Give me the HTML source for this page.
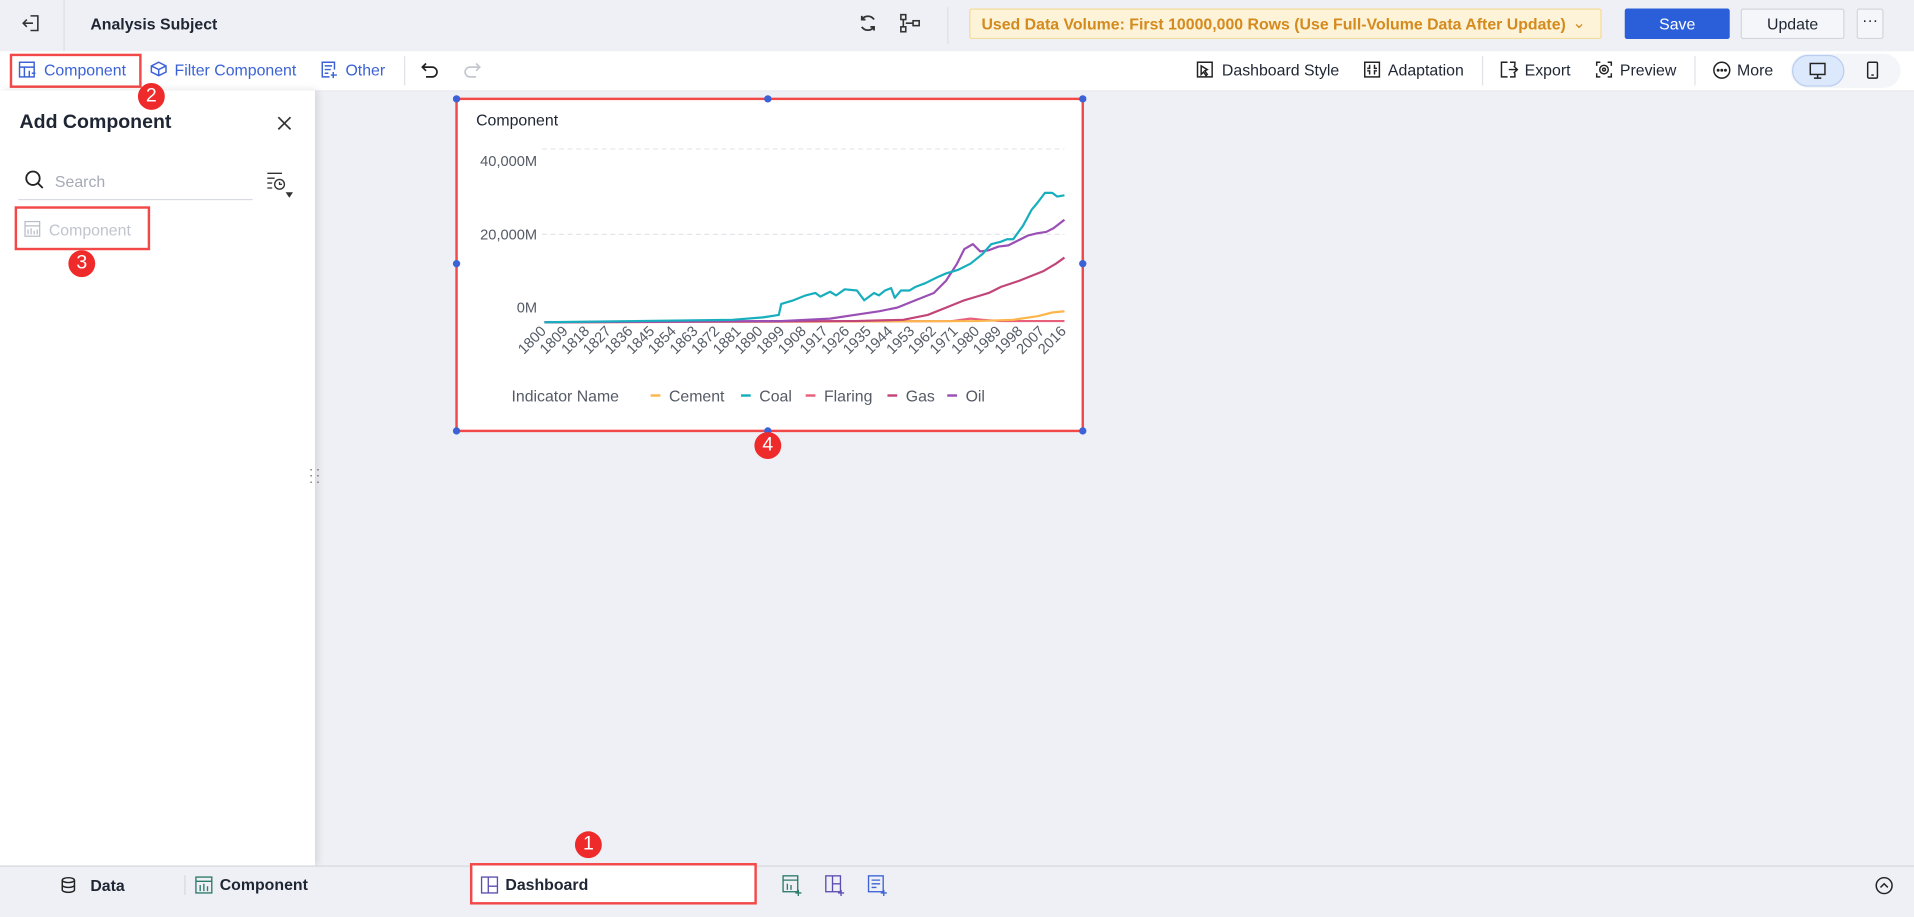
<!DOCTYPE html>
<html><head><meta charset="utf-8"><style>
html,body{margin:0;padding:0;width:1914px;height:915px;overflow:hidden;background:#eef0f5;}
#w{position:absolute;left:0;top:0;width:1568px;height:750px;transform:scale(1.2207);transform-origin:0 0;font-family:"Liberation Sans",sans-serif;color:#1f2633;font-size:13px;}
.a{position:absolute;white-space:nowrap;}
.top{left:0;top:0;width:1568px;height:42px;background:#eef0f5;}
.tb{left:0;top:42px;width:1568px;height:32px;background:#fff;border-bottom:1px solid #e6e8ee;}
.blue{color:#3b62d6;}
.badge{position:absolute;width:22px;height:22px;border-radius:50%;background:#ee2a2a;color:#fff;font-size:16px;text-align:center;line-height:22px;}
.rb{position:absolute;border:2px solid #f24848;box-sizing:border-box;}
svg{position:absolute;overflow:visible}
.ax{font-size:12px;fill:#555b66;}
.t{top:50px}
</style></head><body><div id="w">
<div class="a top"></div>
<svg style="left:18px;top:11px" width="16" height="16" viewBox="0 0 16 16" fill="none" stroke="#333" stroke-width="1.3"><path d="M7 2h6v12H7M1 8h8M4 5L1 8l3 3"/></svg>
<div class="a" style="left:52px;top:0;width:1px;height:42px;background:#dcdfe6"></div>
<div class="a" style="left:74px;top:12px;font-weight:bold;font-size:13px">Analysis Subject</div>
<svg style="left:703px;top:11px" width="16" height="16" viewBox="0 0 16 16" fill="none" stroke="#333" stroke-width="1.5"><path d="M13 5A6 6 0 0 0 3 5M3 11a6 6 0 0 0 10 0M3 2v3h3M13 14v-3h-3"/></svg>
<svg style="left:737px;top:11px" width="18" height="16" viewBox="0 0 18 16" fill="none" stroke="#333" stroke-width="1.3"><rect x="1" y="1" width="4" height="4"/><rect x="1" y="11" width="4" height="4"/><rect x="11" y="6" width="5" height="4"/><path d="M3 5v6M5 8h6"/></svg>
<div class="a" style="left:776px;top:6px;width:1px;height:30px;background:#dcdfe6"></div>
<div class="a" style="left:794px;top:7px;width:518px;height:25px;background:#fdf3d9;border:1px solid #f4dc9a;box-sizing:border-box;border-radius:2px;color:#d48a1c;font-weight:bold;font-size:13px;line-height:23px;padding-left:9px">Used Data Volume: First 10000,000 Rows (Use Full-Volume Data After Update)<span style="position:absolute;right:12px;top:-1px;font-weight:normal">&#8964;</span></div>
<div class="a" style="left:1331px;top:7px;width:86px;height:25px;background:#2b5fd9;border-radius:2px;color:#fff;text-align:center;line-height:25px;font-size:13px">Save</div>
<div class="a" style="left:1426px;top:7px;width:85px;height:25px;background:#f5f6f9;border:1px solid #d3d6de;box-sizing:border-box;border-radius:2px;text-align:center;line-height:23px;font-size:13px">Update</div>
<div class="a" style="left:1521px;top:7px;width:22px;height:25px;background:#f5f6f9;border:1px solid #d3d6de;box-sizing:border-box;border-radius:2px;text-align:center;line-height:18px;font-size:13px">···</div>

<div class="a tb"></div>
<svg style="left:15px;top:50px" width="14" height="14" viewBox="0 0 14 14" fill="none" stroke="#3b62d6" stroke-width="1.2"><rect x="1" y="1" width="12" height="12"/><path d="M1 5h12M5 5v8M9 8v5M11 10h3"/></svg>
<div class="a blue t" style="left:36px">Component</div>
<div class="rb" style="left:8px;top:44px;width:108px;height:28px"></div>
<svg style="left:123px;top:50px" width="14" height="14" viewBox="0 0 14 14" fill="none" stroke="#3b62d6" stroke-width="1.2"><path d="M7 1l6 3v5l-6 3-6-3V4zM1 4l6 3 6-3M7 7v5"/></svg>
<div class="a blue t" style="left:143px">Filter Component</div>
<svg style="left:263px;top:50px" width="14" height="14" viewBox="0 0 14 14" fill="none" stroke="#3b62d6" stroke-width="1.2"><path d="M11 7V1H1v12h6M3 4h6M3 7h5M3 10h3M10 9v5M8 11.5h5"/></svg>
<div class="a blue t" style="left:283px">Other</div>
<div class="a" style="left:331px;top:46px;width:1px;height:24px;background:#e0e2e8"></div>
<svg style="left:345px;top:51px" width="14" height="12" viewBox="0 0 14 12" fill="none" stroke="#222" stroke-width="1.4"><path d="M4 1L1 4l3 3M1 4h8a4 4 0 0 1 0 8H4"/></svg>
<svg style="left:380px;top:51px" width="14" height="12" viewBox="0 0 14 12" fill="none" stroke="#c4c7cf" stroke-width="1.4"><path d="M10 1l3 3-3 3M13 4H5a4 4 0 0 0 0 8h5"/></svg>
<svg style="left:980px;top:50px" width="14" height="14" viewBox="0 0 14 14" fill="none" stroke="#222" stroke-width="1.2"><path d="M1 1h12v12H1zM4 4l5 3-2 1 2 3-1 1-2-3-2 2z"/></svg>
<div class="a t" style="left:1001px">Dashboard Style</div>
<svg style="left:1117px;top:50px" width="14" height="14" viewBox="0 0 14 14" fill="none" stroke="#222" stroke-width="1.2"><rect x="1" y="1" width="12" height="12"/><path d="M5 3v3H3M9 3v3h2M5 11V8H3M9 11V8h2"/></svg>
<div class="a t" style="left:1137px">Adaptation</div>
<div class="a" style="left:1214px;top:46px;width:1px;height:24px;background:#e0e2e8"></div>
<svg style="left:1229px;top:50px" width="14" height="14" viewBox="0 0 14 14" fill="none" stroke="#222" stroke-width="1.2"><path d="M6 1H1v12h5M8 1h4v3M8 13h4v-3M7 7h7M11 4l3 3-3 3"/></svg>
<div class="a t" style="left:1249px">Export</div>
<svg style="left:1307px;top:50px" width="14" height="14" viewBox="0 0 14 14" fill="none" stroke="#222" stroke-width="1.2"><path d="M1 4V1h3M10 1h3v3M13 10v3h-3M4 13H1v-3"/><circle cx="7" cy="7" r="3.5"/><circle cx="7" cy="7" r="1.2"/></svg>
<div class="a t" style="left:1327px">Preview</div>
<div class="a" style="left:1388px;top:46px;width:1px;height:24px;background:#e0e2e8"></div>
<svg style="left:1403px;top:50px" width="15" height="15" viewBox="0 0 15 15" fill="none" stroke="#222" stroke-width="1.2"><circle cx="7.5" cy="7.5" r="6.5"/><circle cx="4.5" cy="7.5" r=".6" fill="#222"/><circle cx="7.5" cy="7.5" r=".6" fill="#222"/><circle cx="10.5" cy="7.5" r=".6" fill="#222"/></svg>
<div class="a t" style="left:1423px">More</div>
<div class="a" style="left:1467px;top:44px;width:90px;height:28px;background:#f3f5f8;border-radius:14px"></div>
<div class="a" style="left:1468px;top:45px;width:43px;height:26px;background:#dce8fb;border:1px solid #b9cdf2;box-sizing:border-box;border-radius:13px"></div>
<svg style="left:1482px;top:51px" width="14" height="14" viewBox="0 0 14 14" fill="none" stroke="#222" stroke-width="1.2"><rect x="1" y="1" width="12" height="9"/><path d="M7 10v3M4 13h6"/></svg>
<svg style="left:1529px;top:50px" width="10" height="15" viewBox="0 0 10 15" fill="none" stroke="#222" stroke-width="1.2"><rect x="1" y="1" width="8" height="13" rx="1"/><path d="M4 11.5h2"/></svg>

<div class="a" style="left:0;top:74px;width:258px;height:635px;background:#fff;box-shadow:2px 0 6px rgba(0,0,0,.12)"></div>
<div class="a" style="left:16px;top:92px;font-weight:bold;font-size:16px">Add Component</div>
<svg style="left:227px;top:95px" width="12" height="12" viewBox="0 0 12 12" stroke="#333" stroke-width="1.4"><path d="M1 1l10 10M11 1L1 11"/></svg>
<svg style="left:20px;top:139px" width="16" height="16" viewBox="0 0 16 16" fill="none" stroke="#222" stroke-width="1.5"><circle cx="7" cy="7" r="5.5"/><path d="M11 11l4 4"/></svg>
<div class="a" style="left:45px;top:141px;color:#a5aab5">Search</div>
<div class="a" style="left:15px;top:163px;width:192px;height:1px;background:#d8dbe1"></div>
<svg style="left:218px;top:140px" width="25" height="22" viewBox="0 0 25 22" fill="none" stroke="#333" stroke-width="1.1"><path d="M1 2h12M1 6h6M1 10h4M1 14h4"/><circle cx="11" cy="11" r="4"/><path d="M11 9v2h2"/><path d="M17 18l2 3 2-3z" fill="#333"/></svg>
<svg style="left:20px;top:181px" width="13" height="13" viewBox="0 0 13 13" fill="none" stroke="#b7bcc6" stroke-width="1"><rect x=".5" y=".5" width="12" height="12"/><path d="M.5 4h12M3 11V7M5.5 11V6M8 11V8M10.5 11V7"/></svg>
<div class="a" style="left:40px;top:181px;color:#c0c4cc">Component</div>
<div class="rb" style="left:12px;top:169px;width:111px;height:36px"></div>
<div class="badge" style="left:113px;top:68px">2</div>
<div class="badge" style="left:56px;top:205px">3</div>
<div class="a" style="left:253px;top:383px;color:#666;font-size:11px;line-height:5px;letter-spacing:2px">··<br>··<br>··</div>

<div class="a" style="left:374px;top:81px;width:513px;height:272px;background:#fff"></div>
<div class="rb" style="left:373px;top:80px;width:515px;height:274px"></div>
<div class="a" style="left:390px;top:91px;font-size:13px">Component</div>
<svg style="left:0;top:0" width="1568" height="750">
<g fill="#3b62d6"><circle cx="374" cy="81" r="3"/><circle cx="629" cy="81" r="3"/><circle cx="887" cy="81" r="3"/><circle cx="374" cy="216" r="3"/><circle cx="887" cy="216" r="3"/><circle cx="374" cy="353" r="3"/><circle cx="629" cy="353" r="3"/><circle cx="887" cy="353" r="3"/></g>
<path d="M444 122H872M444 192H872" stroke="#e3e5ea" stroke-dasharray="4 3"/>
<text class="ax" x="440" y="136" text-anchor="end">40,000M</text>
<text class="ax" x="440" y="196" text-anchor="end">20,000M</text>
<text class="ax" x="440" y="256" text-anchor="end">0M</text>
<g class="ax" text-anchor="end">
<text transform="translate(448,272) rotate(-45)">1800</text><text transform="translate(465.8,272) rotate(-45)">1809</text><text transform="translate(483.5,272) rotate(-45)">1818</text><text transform="translate(501.3,272) rotate(-45)">1827</text><text transform="translate(519,272) rotate(-45)">1836</text><text transform="translate(536.8,272) rotate(-45)">1845</text><text transform="translate(554.5,272) rotate(-45)">1854</text><text transform="translate(572.3,272) rotate(-45)">1863</text><text transform="translate(590,272) rotate(-45)">1872</text><text transform="translate(607.8,272) rotate(-45)">1881</text><text transform="translate(625.5,272) rotate(-45)">1890</text><text transform="translate(643.3,272) rotate(-45)">1899</text><text transform="translate(661,272) rotate(-45)">1908</text><text transform="translate(678.8,272) rotate(-45)">1917</text><text transform="translate(696.5,272) rotate(-45)">1926</text><text transform="translate(714.3,272) rotate(-45)">1935</text><text transform="translate(732,272) rotate(-45)">1944</text><text transform="translate(749.8,272) rotate(-45)">1953</text><text transform="translate(767.5,272) rotate(-45)">1962</text><text transform="translate(785.3,272) rotate(-45)">1971</text><text transform="translate(803,272) rotate(-45)">1980</text><text transform="translate(820.8,272) rotate(-45)">1989</text><text transform="translate(838.5,272) rotate(-45)">1998</text><text transform="translate(856.3,272) rotate(-45)">2007</text><text transform="translate(874,272) rotate(-45)">2016</text>
</g>
<g fill="none" stroke-width="1.8" stroke-linejoin="round">
<polyline stroke="#e8607a" points="446,264 780,263 795,261 805,262 820,263 872,263"/>
<polyline stroke="#fdb64c" points="446,264 800,263 830,262 850,259 862,256 872,255"/>
<polyline stroke="#c2457a" points="446,264 700,263 740,262 760,258 775,252 790,246 800,243 810,240 820,235 835,230 845,226 855,222 865,216 872,211"/>
<polyline stroke="#9a4fb5" points="446,264 640,263 680,261 700,258 720,255 735,252 750,246 765,240 775,230 784,216 790,204 797,200 803,206 810,205 818,202 826,201 834,197 842,193 850,191 857,190 863,187 872,180"/>
<polyline stroke="#17aebd" points="446,264 600,262 625,260 638,258 640,249 650,246 660,242 668,240 672,243 680,239 685,242 692,237 702,238 708,246 716,240 720,242 725,238 730,236 733,244 738,238 745,238 750,235 758,232 768,227 775,224 785,221 795,216 805,208 812,200 820,198 825,196 830,196 838,185 845,172 850,166 856,158 862,158 866,161 872,160"/>
</g>
<text class="ax" x="419" y="329" style="font-size:13px">Indicator Name</text>
<g style="font-size:13px" class="ax">
<path d="M533 324h8" stroke="#fdb64c" stroke-width="2"/><text x="548" y="329">Cement</text>
<path d="M607 324h8" stroke="#17aebd" stroke-width="2"/><text x="622" y="329">Coal</text>
<path d="M660 324h8" stroke="#e8607a" stroke-width="2"/><text x="675" y="329">Flaring</text>
<path d="M727 324h8" stroke="#c2457a" stroke-width="2"/><text x="742" y="329">Gas</text>
<path d="M776 324h8" stroke="#9a4fb5" stroke-width="2"/><text x="791" y="329">Oil</text>
</g>
</svg>
<div class="badge" style="left:618px;top:354px">4</div>

<div class="a" style="left:0;top:709px;width:1568px;height:41px;background:#eef0f5;border-top:1px solid #d5d8de"></div>
<svg style="left:50px;top:718px" width="12" height="14" viewBox="0 0 12 14" fill="none" stroke="#222" stroke-width="1.2"><ellipse cx="6" cy="3" rx="5" ry="2"/><path d="M1 3v8c0 1 2 2 5 2s5-1 5-2V3M1 7c0 1 2 2 5 2s5-1 5-2"/></svg>
<div class="a" style="left:74px;top:718px;font-weight:bold;font-size:13px">Data</div>
<div class="a" style="left:151px;top:717px;width:1px;height:16px;background:#d5d8de"></div>
<svg style="left:160px;top:718px" width="14" height="14" viewBox="0 0 14 14" fill="none" stroke="#2b7a6a" stroke-width="1.1"><rect x=".5" y=".5" width="13" height="13"/><path d="M.5 4h13M4 12V7M7 12V6M10 12V8"/></svg>
<div class="a" style="left:180px;top:717px;font-weight:bold;font-size:13px">Component</div>
<div class="a" style="left:385px;top:707px;width:235px;height:34px;background:#fff;border:2px solid #f24848;box-sizing:border-box"></div>
<svg style="left:394px;top:718px" width="14" height="14" viewBox="0 0 14 14" fill="none" stroke="#5a4fb0" stroke-width="1.1"><rect x=".5" y=".5" width="13" height="13"/><path d="M6 .5v13M6 8h7.5"/></svg>
<div class="a" style="left:414px;top:717px;font-weight:bold;font-size:13px">Dashboard</div>
<div class="badge" style="left:471px;top:681px">1</div>
<svg style="left:641px;top:717px" width="16" height="17" viewBox="0 0 16 17" fill="none" stroke="#2b7a6a" stroke-width="1.1"><rect x=".5" y=".5" width="12" height="13"/><path d="M.5 4h12M4 12V7M7 12V8M13 12v5M10.5 14.5h5"/></svg>
<svg style="left:676px;top:717px" width="16" height="17" viewBox="0 0 16 17" fill="none" stroke="#5a4fb0" stroke-width="1.1"><rect x=".5" y=".5" width="12" height="13"/><path d="M6 .5v13M6 7h6.5M13 12v5M10.5 14.5h5"/></svg>
<svg style="left:711px;top:717px" width="16" height="17" viewBox="0 0 16 17" fill="none" stroke="#3b62d6" stroke-width="1.1"><rect x=".5" y=".5" width="12" height="13"/><path d="M3 4h7M3 7h7M3 10h4M13 12v5M10.5 14.5h5"/></svg>
<svg style="left:1536px;top:718px" width="15" height="15" viewBox="0 0 15 15" fill="none" stroke="#222" stroke-width="1.2"><circle cx="7.5" cy="7.5" r="6.5"/><path d="M4.5 9l3-3 3 3"/></svg>
</div></body></html>
